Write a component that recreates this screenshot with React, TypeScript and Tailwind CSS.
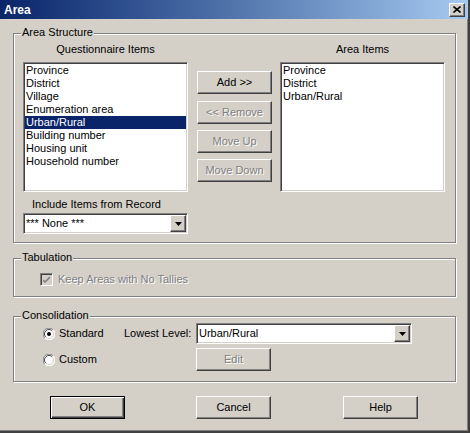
import React from "react";

const raised =
  "border border-t-white border-l-white border-r-[#404040] border-b-[#404040] shadow-[inset_-1px_-1px_0_#808080]";
const sunken =
  "border border-t-[#808080] border-l-[#808080] border-r-white border-b-white shadow-[inset_1px_1px_0_#404040,inset_-1px_-1px_0_#d4d0c8]";
const etched = "border border-[#808080] shadow-[inset_1px_1px_0_#fff,1px_1px_0_#fff]";
const dim = "text-[#808080] [text-shadow:1px_1px_0_#fff]";

const Btn = ({
  label,
  disabled,
  isDefault,
  className = "",
}: {
  label: string;
  disabled?: boolean;
  isDefault?: boolean;
  className?: string;
}) => (
  <div
    className={`w-[75px] h-[23px] flex items-center justify-center leading-none ${
      isDefault
        ? "border border-black shadow-[inset_1px_1px_0_#fff,inset_-1px_-1px_0_#404040,inset_-2px_-2px_0_#808080]"
        : raised
    } ${disabled ? dim : "text-black"} ${className}`}
  >
    {label}
  </div>
);

const Arrow = () => (
  <div className={`w-[16px] h-[17px] bg-[#d4d0c8] flex items-center justify-center ${raised}`}>
    <svg width="7" height="4" viewBox="0 0 7 4">
      <path d="M0 0h7L3.5 4z" fill="#000" />
    </svg>
  </div>
);

const Combo = ({ value, className = "" }: { value: string; className?: string }) => (
  <div className={`h-[21px] bg-white p-[1px] flex items-center ${sunken} ${className}`}>
    <span className="flex-1 pl-[1px] leading-[13px]">{value}</span>
    <Arrow />
  </div>
);

const ListBox = ({ items, selected }: { items: string[]; selected?: number }) => (
  <div className={`w-[165px] h-[130px] bg-white p-[1px] ${sunken}`}>
    {items.map((it, i) => (
      <div
        key={it}
        className={`h-[13px] leading-[13px] pl-[1px] ${
          i === selected ? "bg-[#0a246a] text-white" : "text-black"
        }`}
      >
        {it}
      </div>
    ))}
  </div>
);

const Radio = ({ checked }: { checked?: boolean }) => (
  <svg width="12" height="12" viewBox="0 0 12 12">
    <circle cx="6" cy="6" r="5.5" fill="#fff" />
    <path d="M10.2 1.8A5.5 5.5 0 0 0 1.8 10.2" stroke="#808080" fill="none" />
    <path d="M9.2 2.8A4.3 4.3 0 0 0 2.8 9.2" stroke="#404040" fill="none" />
    <path d="M1.8 10.2A5.5 5.5 0 0 0 10.2 1.8" stroke="#fff" fill="none" />
    <path d="M2.8 9.2A4.3 4.3 0 0 0 9.2 2.8" stroke="#d4d0c8" fill="none" />
    {checked && <circle cx="6" cy="6" r="2" fill="#000" />}
  </svg>
);

const Group = ({
  title,
  className = "",
  children,
}: {
  title: string;
  className?: string;
  children: React.ReactNode;
}) => (
  <div className={`relative ml-[13px] w-[443px] ${etched} ${className}`}>
    <span className="absolute left-[7px] -top-[8px] px-[1px] bg-[#d4d0c8] leading-[13px]">
      {title}
    </span>
    {children}
  </div>
);

export default function App() {
  const questionnaire = [
    "Province",
    "District",
    "Village",
    "Enumeration area",
    "Urban/Rural",
    "Building number",
    "Housing unit",
    "Household number",
  ];

  return (
    <div className="w-[470px] h-[433px] bg-[#d4d0c8] flex flex-col border-r-2 border-b-2 border-[#404040] shadow-[inset_-1px_-1px_0_#808080] text-[11px] text-black font-['Liberation_Sans',Arial,sans-serif] overflow-hidden">
      {/* title bar */}
      <div className="h-[19px] flex items-center bg-linear-to-r from-[#0a246a] to-[#a6caf0]">
        <span className="pl-[4px] text-white font-bold text-[12px]">Area</span>
        <div className={`ml-auto mr-[3px] w-[16px] h-[14px] bg-[#d4d0c8] flex items-center justify-center ${raised}`}>
          <svg width="8" height="7" viewBox="0 0 8 7">
            <path d="M0.5 0.5l7 6M7.5 0.5l-7 6" stroke="#000" strokeWidth="1.6" />
          </svg>
        </div>
      </div>

      <Group title="Area Structure" className="mt-[14px] h-[210px]">
        <div className="flex pl-[9px] pt-[9px]">
          <div className="w-[165px] flex flex-col">
            <div className="h-[13px] leading-[13px] text-center">Questionnaire Items</div>
            <div className="mt-[6px]">
              <ListBox items={questionnaire} selected={4} />
            </div>
            <div className="mt-[6px] h-[13px] leading-[13px] pl-[9px]">Include Items from Record</div>
            <Combo value="*** None ***" className="mt-[2px] w-[165px]" />
          </div>

          <div className="ml-[9px] w-[75px] flex flex-col pt-[28px]">
            <Btn label="Add >>" />
            <Btn label="<< Remove" disabled className="mt-[7px]" />
            <Btn label="Move Up" disabled className="mt-[6px]" />
            <Btn label="Move Down" disabled className="mt-[6px]" />
          </div>

          <div className="ml-[8px] w-[165px] flex flex-col">
            <div className="h-[13px] leading-[13px] text-center">Area Items</div>
            <div className="mt-[6px]">
              <ListBox items={["Province", "District", "Urban/Rural"]} />
            </div>
          </div>
        </div>
      </Group>

      <Group title="Tabulation" className="mt-[15px] h-[39px]">
        <div className="flex items-center pl-[26px] pt-[14px]">
          <div className={`w-[13px] h-[13px] bg-[#d4d0c8] flex items-center justify-center ${sunken}`}>
            <svg width="7" height="7" viewBox="0 0 7 7">
              <path d="M0 2l2 2L7-1" transform="translate(0 2)" stroke="#808080" strokeWidth="1.6" fill="none" />
            </svg>
          </div>
          <span className={`ml-[5px] leading-[13px] ${dim}`}>Keep Areas with No Tallies</span>
        </div>
      </Group>

      <Group title="Consolidation" className="mt-[19px] h-[66px]">
        <div className="flex flex-col pl-[29px] pt-[6px]">
          <div className="flex items-center h-[21px]">
            <div className="w-[81px] flex items-center">
              <Radio checked />
              <span className="ml-[4px]">Standard</span>
            </div>
            <span className="w-[72px]">Lowest Level:</span>
            <Combo value="Urban/Rural" className="w-[216px]" />
          </div>
          <div className="flex items-center h-[23px] mt-[4px]">
            <div className="w-[81px] flex items-center">
              <Radio />
              <span className="ml-[4px]">Custom</span>
            </div>
            <div className="w-[72px]" />
            <Btn label="Edit" disabled />
          </div>
        </div>
      </Group>

      <div className="flex mt-[14px] pl-[50px]">
        <Btn label="OK" isDefault />
        <Btn label="Cancel" className="ml-[71px]" />
        <Btn label="Help" className="ml-[72px]" />
      </div>
    </div>
  );
}
